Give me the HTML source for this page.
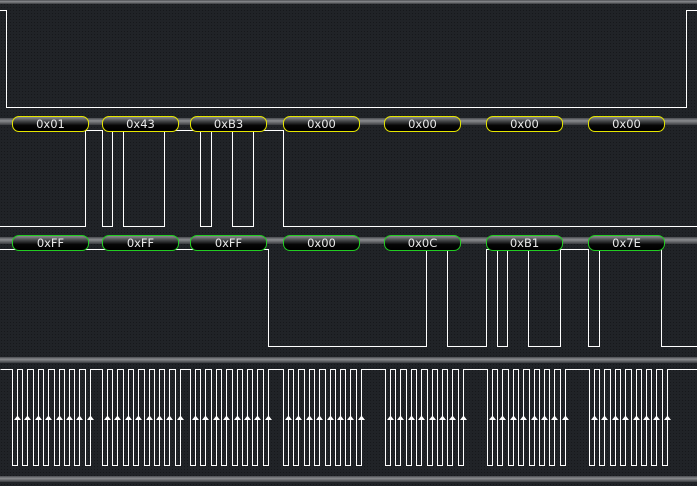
<!DOCTYPE html>
<html><head><meta charset="utf-8">
<style>
html,body{margin:0;padding:0;background:#1f2226;}
#w{position:relative;width:697px;height:486px;overflow:hidden;background:#1f2226;}
svg{position:absolute;left:0;top:0;}
.l{position:absolute;width:75px;height:14px;border-radius:7px;font:11.5px/14px "DejaVu Sans","Liberation Sans",sans-serif;color:#e8e8e8;text-align:center;background:linear-gradient(#8a8c8e 0%,#3a3c3e 35%,#050505 60%,#000 100%);}
.y{border:1px solid #e6e600;top:116px;}
.g{border:1px solid #22cc22;top:235px;}
</style></head><body><div id="w">
<svg width="697" height="486" viewBox="0 0 697 486">
<defs>
<pattern id="dots" width="3" height="3" patternUnits="userSpaceOnUse"><rect width="3" height="3" fill="#202327"/><rect x="1" y="1" width="1" height="1" fill="#16181b"/></pattern>
<linearGradient id="bar" x1="0" y1="0" x2="0" y2="1"><stop offset="0" stop-color="#4a4c50"/><stop offset="0.4" stop-color="#8a8c8f"/><stop offset="1" stop-color="#3a3c40"/></linearGradient>
<path id="ar" d="M-3.5 2 L3.5 2 L0 -2.5 Z" fill="#fff"/>
</defs>
<rect width="697" height="486" fill="url(#dots)"/>
<rect x="0" y="0" width="697" height="4" fill="url(#bar)"/>
<rect x="0" y="118" width="697" height="7" fill="url(#bar)"/>
<rect x="0" y="237" width="697" height="7" fill="url(#bar)"/>
<rect x="0" y="357" width="697" height="6" fill="url(#bar)"/>
<rect x="0" y="476" width="697" height="6" fill="url(#bar)"/>
<g fill="none" stroke="#fff" stroke-width="1">
<path d="M0 10.5 H6.5 V107.5 H686.5 V10.5 H697"/>
<path d="M0 226.5 H85.5 V130.5 H102.5 V226.5 H112.5 V130.5 H123.5 V226.5 H164.5 V130.5 H200.5 V226.5 H211.5 V130.5 H232.5 V226.5 H253.5 V130.5 H283.5 V226.5 H697"/>
<path d="M0 249.5 H268.5 V346.5 H426.5 V249.5 H447.5 V346.5 H486.5 V249.5 H497.5 V346.5 H507.5 V249.5 H528.5 V346.5 H560.5 V249.5 H588.5 V346.5 H599.5 V249.5 H661.5 V346.5 H697"/>
<path transform="translate(0.5,0.5)" d="M0 369 H12 V465h5V369h5V465h5V369h6V465h5V369h5V465h5V369h6V465h5V369h5V465h5V369h5V465h5V369h6V465h5V369
H102 V465h5V369h5V465h5V369h6V465h5V369h5V465h5V369h6V465h5V369h5V465h5V369h5V465h5V369h6V465h5V369
H190 V465h5V369h5V465h5V369h6V465h5V369h5V465h5V369h6V465h5V369h5V465h5V369h5V465h5V369h6V465h5V369
H283 V465h5V369h5V465h5V369h6V465h5V369h5V465h5V369h6V465h5V369h5V465h5V369h5V465h5V369h6V465h5V369
H385 V465h5V369h5V465h5V369h6V465h5V369h5V465h5V369h6V465h5V369h5V465h5V369h5V465h5V369h6V465h5V369
H487 V465h5V369h5V465h5V369h6V465h5V369h5V465h5V369h6V465h5V369h5V465h5V369h5V465h5V369h6V465h5V369
H589 V465h5V369h5V465h5V369h6V465h5V369h5V465h5V369h6V465h5V369h5V465h5V369h5V465h5V369h6V465h5V369 H697"/>
</g>
<g transform="translate(0.5,418)">
<use href="#ar" x="17"/><use href="#ar" x="27"/><use href="#ar" x="38"/><use href="#ar" x="48"/><use href="#ar" x="59"/><use href="#ar" x="69"/><use href="#ar" x="79"/><use href="#ar" x="90"/>
<use href="#ar" x="107"/><use href="#ar" x="117"/><use href="#ar" x="128"/><use href="#ar" x="138"/><use href="#ar" x="149"/><use href="#ar" x="159"/><use href="#ar" x="169"/><use href="#ar" x="180"/>
<use href="#ar" x="195"/><use href="#ar" x="205"/><use href="#ar" x="216"/><use href="#ar" x="226"/><use href="#ar" x="237"/><use href="#ar" x="247"/><use href="#ar" x="257"/><use href="#ar" x="268"/>
<use href="#ar" x="288"/><use href="#ar" x="298"/><use href="#ar" x="309"/><use href="#ar" x="319"/><use href="#ar" x="330"/><use href="#ar" x="340"/><use href="#ar" x="350"/><use href="#ar" x="361"/>
<use href="#ar" x="390"/><use href="#ar" x="400"/><use href="#ar" x="411"/><use href="#ar" x="421"/><use href="#ar" x="432"/><use href="#ar" x="442"/><use href="#ar" x="452"/><use href="#ar" x="463"/>
<use href="#ar" x="492"/><use href="#ar" x="502"/><use href="#ar" x="513"/><use href="#ar" x="523"/><use href="#ar" x="534"/><use href="#ar" x="544"/><use href="#ar" x="554"/><use href="#ar" x="565"/>
<use href="#ar" x="594"/><use href="#ar" x="604"/><use href="#ar" x="615"/><use href="#ar" x="625"/><use href="#ar" x="636"/><use href="#ar" x="646"/><use href="#ar" x="656"/><use href="#ar" x="667"/>
</g>
</svg>
<div class="l y" style="left:12px">0x01</div>
<div class="l y" style="left:102px">0x43</div>
<div class="l y" style="left:190px">0xB3</div>
<div class="l y" style="left:283px">0x00</div>
<div class="l y" style="left:384px">0x00</div>
<div class="l y" style="left:486px">0x00</div>
<div class="l y" style="left:588px">0x00</div>
<div class="l g" style="left:12px">0xFF</div>
<div class="l g" style="left:102px">0xFF</div>
<div class="l g" style="left:190px">0xFF</div>
<div class="l g" style="left:283px">0x00</div>
<div class="l g" style="left:384px">0x0C</div>
<div class="l g" style="left:486px">0xB1</div>
<div class="l g" style="left:588px">0x7E</div>
</div></body></html>
